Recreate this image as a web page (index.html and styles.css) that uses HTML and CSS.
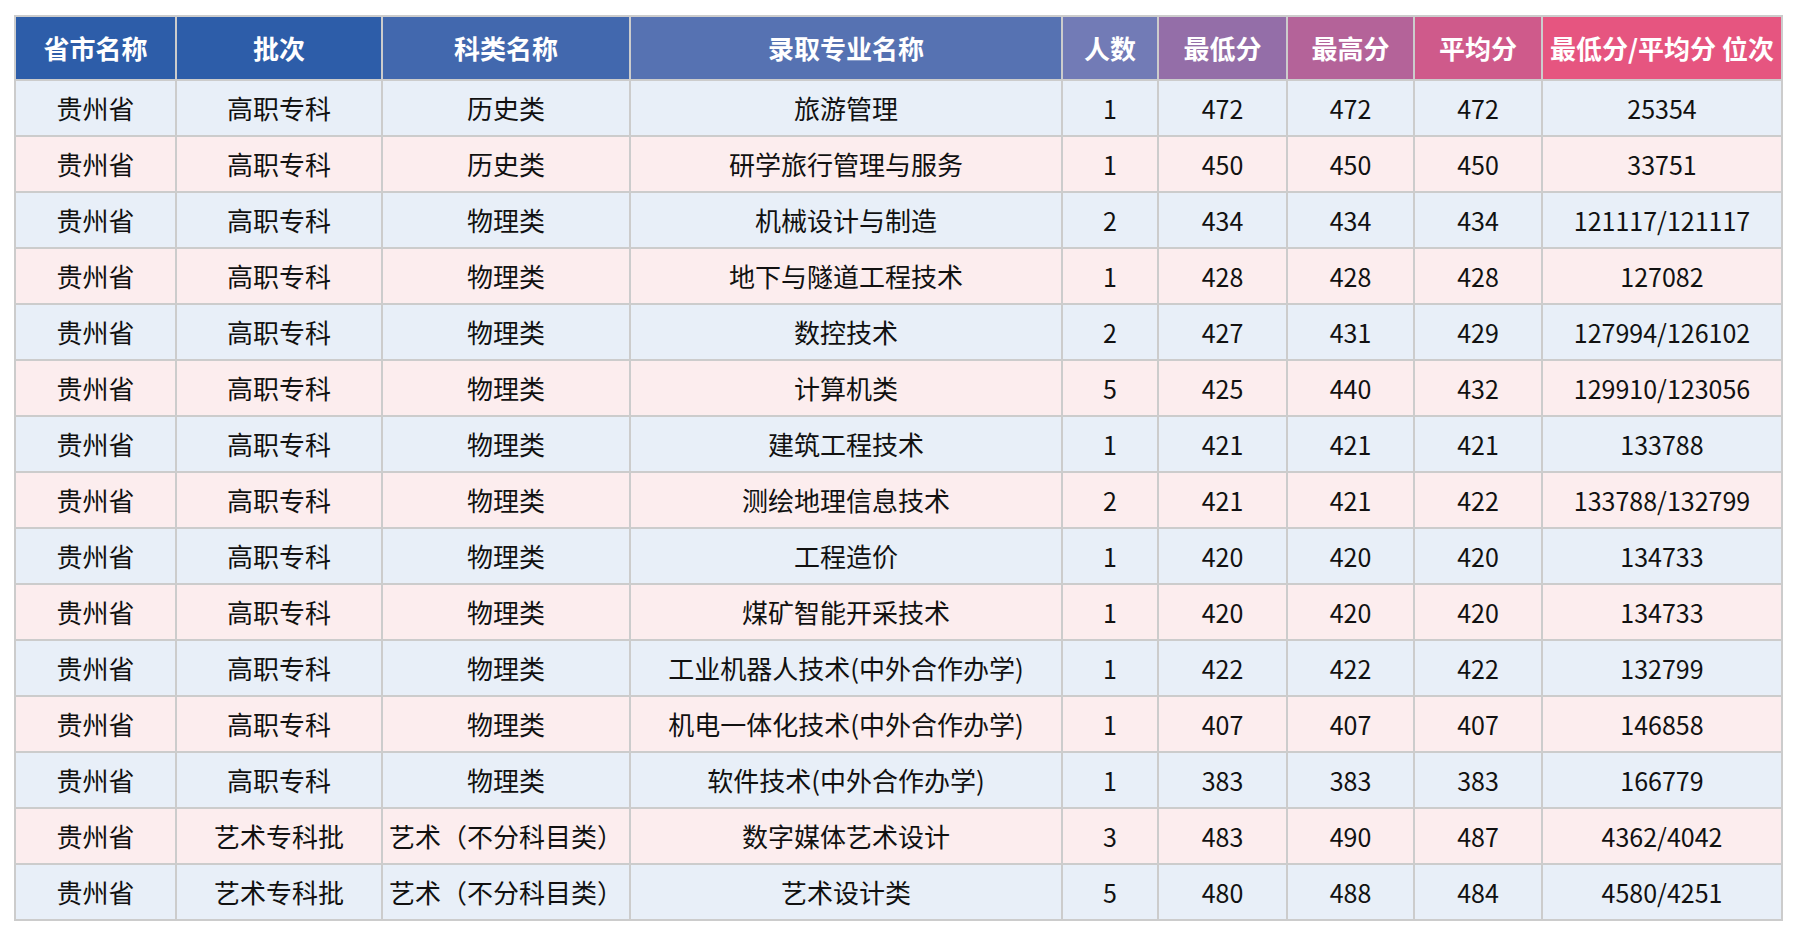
FILE: index.html
```html
<!DOCTYPE html>
<html lang="zh-CN">
<head>
<meta charset="utf-8">
<title>录取分数</title>
<link rel="stylesheet" href="styles.css">
</head>
<body>
<div class="wrap">
<table class="score-table">
<colgroup>
<col class="c1"><col class="c2"><col class="c3"><col class="c4"><col class="c5"><col class="c6"><col class="c7"><col class="c8"><col class="c9">
</colgroup>
<thead>
<tr>
<th class="h1">省市名称</th><th class="h2">批次</th><th class="h3">科类名称</th><th class="h4">录取专业名称</th><th class="h5">人数</th><th class="h6">最低分</th><th class="h7">最高分</th><th class="h8">平均分</th><th class="h9">最低分/平均分 位次</th>
</tr>
</thead>
<tbody>
<tr><td>贵州省</td><td>高职专科</td><td>历史类</td><td>旅游管理</td><td class="num">1</td><td class="num">472</td><td class="num">472</td><td class="num">472</td><td class="num">25354</td></tr>
<tr><td>贵州省</td><td>高职专科</td><td>历史类</td><td>研学旅行管理与服务</td><td class="num">1</td><td class="num">450</td><td class="num">450</td><td class="num">450</td><td class="num">33751</td></tr>
<tr><td>贵州省</td><td>高职专科</td><td>物理类</td><td>机械设计与制造</td><td class="num">2</td><td class="num">434</td><td class="num">434</td><td class="num">434</td><td class="num">121117/121117</td></tr>
<tr><td>贵州省</td><td>高职专科</td><td>物理类</td><td>地下与隧道工程技术</td><td class="num">1</td><td class="num">428</td><td class="num">428</td><td class="num">428</td><td class="num">127082</td></tr>
<tr><td>贵州省</td><td>高职专科</td><td>物理类</td><td>数控技术</td><td class="num">2</td><td class="num">427</td><td class="num">431</td><td class="num">429</td><td class="num">127994/126102</td></tr>
<tr><td>贵州省</td><td>高职专科</td><td>物理类</td><td>计算机类</td><td class="num">5</td><td class="num">425</td><td class="num">440</td><td class="num">432</td><td class="num">129910/123056</td></tr>
<tr><td>贵州省</td><td>高职专科</td><td>物理类</td><td>建筑工程技术</td><td class="num">1</td><td class="num">421</td><td class="num">421</td><td class="num">421</td><td class="num">133788</td></tr>
<tr><td>贵州省</td><td>高职专科</td><td>物理类</td><td>测绘地理信息技术</td><td class="num">2</td><td class="num">421</td><td class="num">421</td><td class="num">422</td><td class="num">133788/132799</td></tr>
<tr><td>贵州省</td><td>高职专科</td><td>物理类</td><td>工程造价</td><td class="num">1</td><td class="num">420</td><td class="num">420</td><td class="num">420</td><td class="num">134733</td></tr>
<tr><td>贵州省</td><td>高职专科</td><td>物理类</td><td>煤矿智能开采技术</td><td class="num">1</td><td class="num">420</td><td class="num">420</td><td class="num">420</td><td class="num">134733</td></tr>
<tr><td>贵州省</td><td>高职专科</td><td>物理类</td><td>工业机器人技术(中外合作办学)</td><td class="num">1</td><td class="num">422</td><td class="num">422</td><td class="num">422</td><td class="num">132799</td></tr>
<tr><td>贵州省</td><td>高职专科</td><td>物理类</td><td>机电一体化技术(中外合作办学)</td><td class="num">1</td><td class="num">407</td><td class="num">407</td><td class="num">407</td><td class="num">146858</td></tr>
<tr><td>贵州省</td><td>高职专科</td><td>物理类</td><td>软件技术(中外合作办学)</td><td class="num">1</td><td class="num">383</td><td class="num">383</td><td class="num">383</td><td class="num">166779</td></tr>
<tr><td>贵州省</td><td>艺术专科批</td><td>艺术（不分科目类）</td><td>数字媒体艺术设计</td><td class="num">3</td><td class="num">483</td><td class="num">490</td><td class="num">487</td><td class="num">4362/4042</td></tr>
<tr><td>贵州省</td><td>艺术专科批</td><td>艺术（不分科目类）</td><td>艺术设计类</td><td class="num">5</td><td class="num">480</td><td class="num">488</td><td class="num">484</td><td class="num">4580/4251</td></tr>
</tbody>
</table>
</div>
</body>
</html>
```

FILE: styles.css
```css
html, body {
  margin: 0;
  padding: 0;
  background: #ffffff;
}
.wrap {
  padding: 15px 0 0 14px;
}
.score-table {
  border-collapse: collapse;
  table-layout: fixed;
  width: 1767px;
  font-family: "Noto Sans CJK SC", "Noto Sans", sans-serif;
  font-size: 26px;
  color: #111111;
  border: 2px solid #cccccc;
}
.c1 { width: 161px; }
.c2 { width: 206px; }
.c3 { width: 248px; }
.c4 { width: 432px; }
.c5 { width: 96px; }
.c6 { width: 129px; }
.c7 { width: 127px; }
.c8 { width: 128px; }
.c9 { width: 240px; }
.score-table th,
.score-table td {
  border: 2px solid #cccccc;
  text-align: center;
  vertical-align: middle;
  padding: 0;
  white-space: nowrap;
  overflow: visible;
  line-height: 1.2;
}
.score-table th {
  height: 62px;
  color: #ffffff;
  font-weight: 700;
}
.score-table td {
  height: 54px;
}
.score-table td.num {
  font-size: 25px;
}
.h1 { background: #2d5da9; }
.h2 { background: #2d5da9; }
.h3 { background: #4268ae; }
.h4 { background: #5672b2; }
.h5 { background: #727bb6; }
.h6 { background: #946ea8; }
.h7 { background: #b46399; }
.h8 { background: #cf5a8b; }
.h9 { background: #e65580; }
.score-table tbody tr:nth-child(odd) td { background: #e8eff8; }
.score-table tbody tr:nth-child(even) td { background: #fcedee; }
```
